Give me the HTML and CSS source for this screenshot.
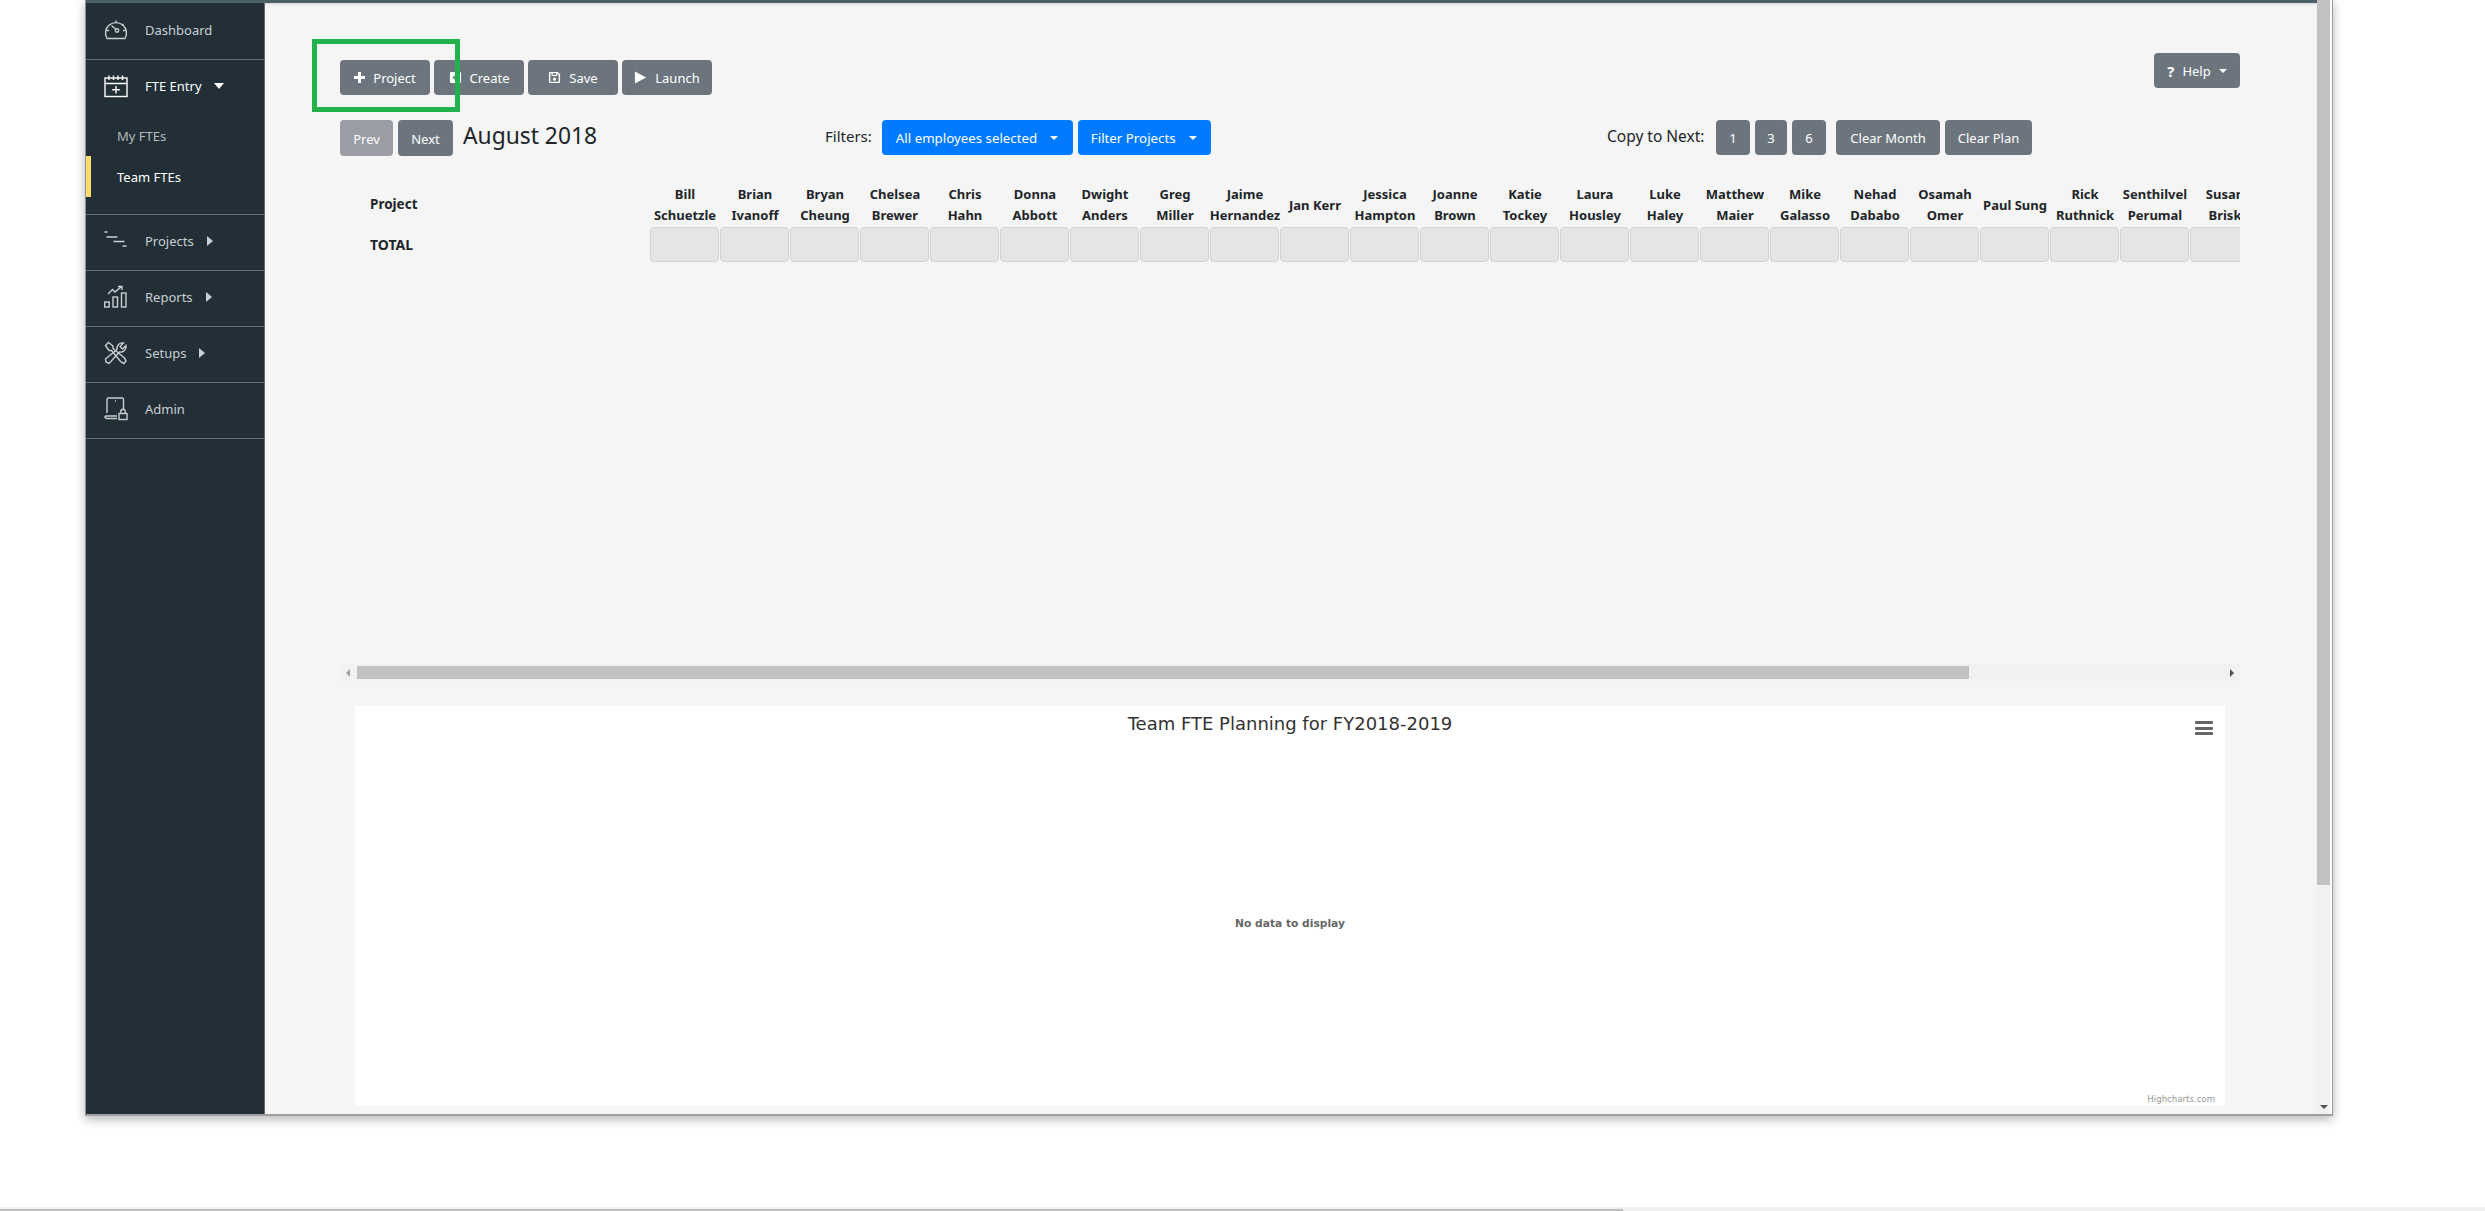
FILE: index.html
```html
<!DOCTYPE html>
<html>
<head>
    <title>Team FTEs</title>
    <link rel="stylesheet" href="styles.css">
</head>
<body>
    <div class="window">
        <nav class="sidebar">
            <a class="nav-item">
                <svg class="nav-icon" viewBox="0 0 24 24"><path d="M3 20.500A10.500 10.500 0 1 1 21 20.500Z"/><circle cx="13" cy="12.500" r="1.700"/><path d="M7.500 7.500L11.800 11.300M12 2.500V5M2.500 12.500H5M19 12.500H21.500M19.500 6L18 7.500"/></svg>
                Dashboard
            </a>
            <div class="nav-group">
                <a class="nav-item active">
                    <svg class="nav-icon" viewBox="0 0 24 24"><rect x="1" y="4" width="22" height="18.500"/><path d="M1 9.500H23M5 1.500V6M9.500 1.500V6M14 1.500V6M18.500 1.500V6M12 12V19.500M8.200 15.700H15.800"/></svg>
                    FTE Entry
                    <span class="caret-down"></span>
                </a>
                <a class="sub-item">My FTEs</a>
                <a class="sub-item current">Team FTEs</a>
            </div>
            <a class="nav-item">
                <svg class="nav-icon" viewBox="0 0 24 24"><path d="M0.500 3H3.500M2.500 8H13.500M9.500 12.500H20.500M18.500 17H22.500"/></svg>
                Projects
                <span class="caret-right"></span>
            </a>
            <a class="nav-item">
                <svg class="nav-icon" viewBox="0 0 24 24"><rect x="0.700" y="17" width="4.500" height="5"/><rect x="9" y="12" width="4.500" height="10"/><rect x="17.500" y="8" width="4.500" height="14"/><path d="M4 9L8.500 4.500L11 7L17.500 1.500M14 1.500H18V5"/></svg>
                Reports
                <span class="caret-right"></span>
            </a>
            <a class="nav-item">
                <svg class="nav-icon" viewBox="0 0 24 24"><path d="M1.500 4.500L4.500 1.500L9 5V7.500L20.500 17L22 20L20 22.500L17 21L7.500 9.500H5Z"/><path d="M22 4.500L18.500 8L16 5.500L19.500 2A5.500 5.500 0 0 0 13 8.500L1.500 18L2 21L5 22.500L15.500 11A5.500 5.500 0 0 0 22 4.500Z"/></svg>
                Setups
                <span class="caret-right"></span>
            </a>
            <a class="nav-item">
                <svg class="nav-icon" viewBox="0 0 24 24"><path d="M3 16V2.500Q3 1 4.500 1H18Q19.500 1 19.500 2.500V12M1 19H13M1 19Q1 21.500 3 21.500H13M11 4H12"/><rect x="15" y="16.500" width="8" height="6"/><path d="M16.800 16.500V14.500A2.200 2.200 0 0 1 21.200 14.500V16.500"/></svg>
                Admin
            </a>
        </nav>

        <main class="content">
            <div class="toolbar">
                <div class="btn-group">
                    <button class="btn"><span class="plus"></span>Project</button>
                    <button class="btn">
                        <svg class="btn-icon" viewBox="0 0 14 14"><path class="solid" d="M1 2.500Q1 1 2.500 1H11.500Q13 1 13 2.500V11.500Q13 13 11.500 13H2.500Q1 13 1 11.500ZM6 4V6H4V8H6V10H8V8H10V6H8V4Z"/></svg>
                        Create
                    </button>
                    <button class="btn">
                        <svg class="btn-icon" viewBox="0 0 14 14"><path class="solid" d="M1 2.500Q1 1 2.500 1H10.500L13 3.500V11.500Q13 13 11.500 13H2.500Q1 13 1 11.500ZM2.500 2.500V11.500H11.500V4L10 2.500V5.500H3.800V2.500ZM5 2.500V4.300H8.800V2.500ZM7 7A1.700 1.700 0 1 0 7 10.400A1.700 1.700 0 1 0 7 7Z"/></svg>
                        Save
                    </button>
                    <button class="btn">
                        <svg class="btn-icon" viewBox="0 0 14 14"><path class="solid" d="M1 0.500L13 7L1 13.500Z"/></svg>
                        Launch
                    </button>
                </div>
                <button class="btn btn-help"><b class="help-mark">?</b>Help<span class="caret-small"></span></button>
            </div>

            <div class="controls">
                <div class="month-nav">
                    <button class="btn btn-tall disabled">Prev</button>
                    <button class="btn btn-tall">Next</button>
                    <span class="month">August 2018</span>
                </div>
                <div class="filters">
                    <span class="control-label">Filters:</span>
                    <button class="btn btn-blue btn-employees">All employees selected<span class="caret-small"></span></button>
                    <button class="btn btn-blue btn-filter">Filter Projects<span class="caret-small"></span></button>
                </div>
                <div class="copy">
                    <span class="control-label">Copy to Next:</span>
                    <button class="btn btn-num first">1</button>
                    <button class="btn btn-num">3</button>
                    <button class="btn btn-num last">6</button>
                    <button class="btn btn-clear-month">Clear Month</button>
                    <button class="btn btn-clear-plan">Clear Plan</button>
                </div>
            </div>

            <div class="plan">
                <div class="plan-grid">
                    <div class="head-project">Project</div>
                    <div class="name">Bill<br>Schuetzle</div>
                    <div class="name">Brian<br>Ivanoff</div>
                    <div class="name">Bryan<br>Cheung</div>
                    <div class="name">Chelsea<br>Brewer</div>
                    <div class="name">Chris<br>Hahn</div>
                    <div class="name">Donna<br>Abbott</div>
                    <div class="name">Dwight<br>Anders</div>
                    <div class="name">Greg<br>Miller</div>
                    <div class="name">Jaime<br>Hernandez</div>
                    <div class="name">Jan Kerr</div>
                    <div class="name">Jessica<br>Hampton</div>
                    <div class="name">Joanne<br>Brown</div>
                    <div class="name">Katie<br>Tockey</div>
                    <div class="name">Laura<br>Housley</div>
                    <div class="name">Luke<br>Haley</div>
                    <div class="name">Matthew<br>Maier</div>
                    <div class="name">Mike<br>Galasso</div>
                    <div class="name">Nehad<br>Dababo</div>
                    <div class="name">Osamah<br>Omer</div>
                    <div class="name">Paul Sung</div>
                    <div class="name">Rick<br>Ruthnick</div>
                    <div class="name">Senthilvel<br>Perumal</div>
                    <div class="name">Susan<br>Brisk</div>

                    <div class="head-total">TOTAL</div>
                    <div class="cell"></div><div class="cell"></div><div class="cell"></div><div class="cell"></div>
                    <div class="cell"></div><div class="cell"></div><div class="cell"></div><div class="cell"></div>
                    <div class="cell"></div><div class="cell"></div><div class="cell"></div><div class="cell"></div>
                    <div class="cell"></div><div class="cell"></div><div class="cell"></div><div class="cell"></div>
                    <div class="cell"></div><div class="cell"></div><div class="cell"></div><div class="cell"></div>
                    <div class="cell"></div><div class="cell"></div><div class="cell"></div>
                </div>
            </div>

            <div class="hscroll">
                <span class="arrow-left"></span>
                <div class="hscroll-track"><div class="hscroll-thumb"></div></div>
                <span class="arrow-right"></span>
            </div>

            <section class="chart">
                <h2 class="chart-title">Team FTE Planning for FY2018-2019</h2>
                <div class="chart-menu"><i></i><i></i><i></i></div>
                <p class="no-data">No data to display</p>
                <span class="credits">Highcharts.com</span>
            </section>
        </main>

        <div class="vscroll">
            <div class="vscroll-thumb"></div>
            <span class="arrow-down"></span>
        </div>
    </div>
    <div class="page-scroll"><div class="page-scroll-thumb"></div></div>
</body>
</html>
```

FILE: styles.css
```css
html, body {
    height: 100%;
}
body {
    margin: 0;
    overflow: hidden;
    background-color: #ffffff;
    color: #212529;
    font-family: "Noto Sans", "Open Sans", sans-serif;
    font-size: 13px;
}
.window {
    display: flex;
    box-sizing: border-box;
    width: 2248px;
    height: 1116px;
    margin-left: 85px;
    background-color: #ffffff;
    border-left: 1px solid #8f9396;
    border-right: 1px solid #9c9c9c;
    border-bottom: 2px solid #a0a0a0;
    box-shadow: 0 3px 10px rgba(0, 0, 0, 0.3);
}

/* sidebar */
.sidebar {
    flex: 0 0 178px;
    padding-top: 1px;
    background-color: #232f37;
    border-top: 3px solid #4b5f68;
    border-right: 1px solid #666c70;
}
.nav-item {
    display: flex;
    align-items: center;
    box-sizing: border-box;
    height: 56px;
    padding: 0 0 4px 18px;
    border-bottom: 1px solid #666c70;
    color: #c8ced2;
}
.nav-icon {
    width: 24px;
    height: 24px;
    margin-right: 17px;
    fill: none;
    stroke: currentColor;
    stroke-width: 1.4;
}
.nav-group {
    padding-bottom: 17px;
    border-bottom: 1px solid #666c70;
}
.nav-group .nav-item {
    height: 55px;
    padding-bottom: 3px;
    border-bottom: none;
}
.nav-item.active {
    color: #ffffff;
}
.sub-item {
    display: block;
    height: 41px;
    padding-left: 26px;
    border-left: 5px solid transparent;
    line-height: 42px;
    color: #b4babe;
}
.sub-item.current {
    border-left-color: #ffdd6b;
    color: #ffffff;
}
.caret-down {
    margin-left: 12px;
    border-top: 6px solid #ffffff;
    border-left: 5px solid transparent;
    border-right: 5px solid transparent;
}
.caret-right {
    margin-left: 13px;
    border-left: 6px solid #c8ced2;
    border-top: 5px solid transparent;
    border-bottom: 5px solid transparent;
}

/* main area */
.content {
    flex: 1;
    position: relative;
    box-sizing: border-box;
    padding: 53px 75px 0;
    background-color: #f5f5f5;
    box-shadow: inset 0 3px 0 #4b5f68, inset 0 5px 3px -1px rgba(0, 0, 0, 0.12);
}
.content::before {
    content: "";
    position: absolute;
    left: 47px;
    top: 39px;
    width: 138px;
    height: 63px;
    border: 5px solid #22b14c;
    z-index: 2;
}
.toolbar {
    display: flex;
    justify-content: space-between;
    align-items: flex-start;
    width: 1900px;
    height: 42px;
    margin-bottom: 25px;
}
.btn-group {
    display: flex;
    gap: 4px;
    margin-top: 7px;
}
.btn {
    display: inline-flex;
    align-items: center;
    justify-content: center;
    box-sizing: border-box;
    width: 90px;
    height: 35px;
    padding: 0;
    background-color: #6c757d;
    border: none;
    border-radius: 4px;
    color: #ffffff;
    font-family: inherit;
    font-size: 13px;
}
.plus {
    position: relative;
    width: 11px;
    height: 11px;
    margin-right: 8px;
    background:
        linear-gradient(#fff, #fff) center / 11px 3px no-repeat,
        linear-gradient(#fff, #fff) center / 3px 11px no-repeat;
}
.btn-icon {
    width: 13px;
    height: 13px;
    margin-right: 8px;
}
.solid {
    fill: #ffffff;
    fill-rule: evenodd;
}
.btn-help {
    width: 86px;
}
.help-mark {
    margin-right: 8px;
    font-size: 15px;
}
.caret-small {
    margin-left: 13px;
    border-top: 4px solid #ffffff;
    border-left: 4px solid transparent;
    border-right: 4px solid transparent;
}
.btn-help .caret-small {
    margin-left: 8px;
}

.controls {
    display: grid;
    grid-template-columns: 485px 782px auto;
    height: 36px;
    margin-bottom: 27px;
}
.month-nav, .filters, .copy {
    display: flex;
    align-items: flex-start;
}
.btn-tall {
    height: 36px;
    padding-top: 2px;
}
.disabled {
    width: 53px;
    background-color: #9a9ea4;
    margin-right: 5px;
}
.btn-tall:not(.disabled) {
    width: 55px;
    margin-right: 10px;
}
.month {
    font-size: 22.800px;
    line-height: 31px;
}
.control-label {
    line-height: 32px;
}
.filters .control-label {
    margin-right: 10px;
    font-size: 15px;
}
.copy .control-label {
    width: 100px;
    margin-right: 9px;
    font-size: 15.500px;
    white-space: nowrap;
}
.btn-blue {
    justify-content: flex-start;
    padding-left: 13px;
    background-color: #007bff;
    font-size: 13.300px;
    margin-right: 5px;
}
.btn-employees {
    width: 191px;
    padding-left: 14px;
}
.btn-filter {
    width: 133px;
}
.btn-num {
    width: 32px;
    margin-right: 5px;
}
.btn-num.first, .btn-num.last {
    width: 34px;
}
.btn-clear-month {
    width: 104px;
    margin-left: 5px;
    margin-right: 5px;
}
.btn-clear-plan {
    width: 87px;
}

/* plan table */
.plan {
    width: 1900px;
    height: 481px;
    overflow: hidden;
}
.plan-grid {
    display: grid;
    grid-template-columns: 310px repeat(23, 70px);
    grid-template-rows: 44px 35px;
    font-weight: 700;
    font-size: 13px;
}
.head-project, .head-total {
    padding-left: 30px;
    align-self: center;
    font-size: 13.500px;
}
.head-project {
    padding-bottom: 2px;
}
.head-total {
    font-size: 14px;
}
.name {
    display: flex;
    align-items: center;
    justify-content: center;
    box-sizing: border-box;
    text-align: center;
    line-height: 21px;
    white-space: nowrap;
}
.cell {
    margin-right: 1px;
    background-color: #e5e5e5;
    border: 1px solid #d0d4da;
    border-radius: 4px;
}
.hscroll {
    display: flex;
    align-items: center;
    width: 1900px;
    height: 17px;
    background-color: #f1f1f1;
}
.hscroll-track {
    flex: 1;
}
.hscroll-thumb {
    width: 1612px;
    height: 13px;
    background-color: #c1c1c1;
}
.arrow-left {
    width: 0;
    margin: 0 7px 0 6px;
    border-right: 4px solid #a3a3a3;
    border-top: 4px solid transparent;
    border-bottom: 4px solid transparent;
}
.arrow-right {
    width: 0;
    margin: 0 6px 0 7px;
    border-left: 4px solid #505050;
    border-top: 4px solid transparent;
    border-bottom: 4px solid transparent;
}

/* chart */
.chart {
    position: relative;
    width: 1870px;
    height: 400px;
    margin: 25px 0 0 15px;
    background-color: #ffffff;
}
.chart-title {
    margin: 0;
    padding-top: 6px;
    text-align: center;
    font-family: "DejaVu Sans", sans-serif;
    font-size: 18px;
    font-weight: 400;
    line-height: 24px;
    color: #333333;
}
.chart-menu {
    position: absolute;
    top: 15px;
    right: 12px;
    display: flex;
    flex-direction: column;
    gap: 2.500px;
}
.chart-menu i {
    width: 18px;
    height: 3px;
    background-color: #666666;
    border-radius: 1px;
}
.no-data {
    margin: 181px 0 0;
    text-align: center;
    font-family: "DejaVu Sans", sans-serif;
    font-size: 10.700px;
    font-weight: 700;
    color: #666666;
}
.credits {
    position: absolute;
    right: 10px;
    bottom: 2px;
    font-family: "DejaVu Sans", sans-serif;
    font-size: 8.600px;
    color: #999999;
}

/* window scrollbars */
.vscroll {
    position: relative;
    flex: 0 0 13px;
    margin-right: 2px;
    background-color: #f1f1f1;
}
.vscroll-thumb {
    height: 885px;
    background-color: #c1c1c1;
}
.arrow-down {
    position: absolute;
    left: 3px;
    bottom: 5px;
    border-top: 4px solid #505050;
    border-left: 4px solid transparent;
    border-right: 4px solid transparent;
}
.page-scroll {
    height: 4px;
    margin-top: 91px;
    background-color: #f0f0f0;
}
.page-scroll-thumb {
    position: relative;
    top: 2px;
    width: 1623px;
    height: 2px;
    background-color: #bdbdbd;
}
```
